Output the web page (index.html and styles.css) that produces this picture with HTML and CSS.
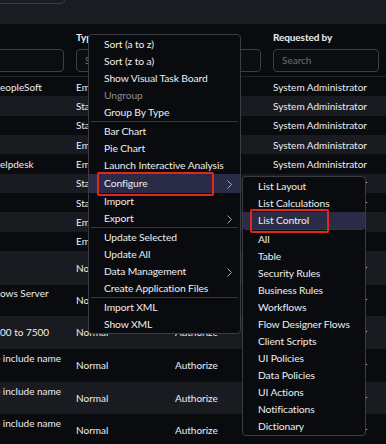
FILE: index.html
```html
<!DOCTYPE html>
<html lang="en">
<head>
    <meta charset="UTF-8">
    <title>Change Requests</title>
    <link rel="stylesheet" href="styles.css">
</head>
<body>
    <div class="topbar">
        <div class="top-input"></div>
    </div>

    <div class="list">
        <div class="row head">
            <div></div>
            <div>Type</div>
            <div>Approval</div>
            <div>Requested by</div>
        </div>
        <div class="row filters">
            <div><div class="search first"></div></div>
            <div><div class="search">Search</div></div>
            <div><div class="search">Search</div></div>
            <div><div class="search">Search</div></div>
        </div>

        <div class="row"><div>eopleSoft</div><div>Emergency</div><div>Authorize</div><div>System Administrator</div></div>
        <div class="row alt"><div></div><div>Standard</div><div>Authorize</div><div>System Administrator</div></div>
        <div class="row"><div></div><div>Standard</div><div>Authorize</div><div>System Administrator</div></div>
        <div class="row alt"><div></div><div>Emergency</div><div>Authorize</div><div>System Administrator</div></div>
        <div class="row"><div>elpdesk</div><div>Emergency</div><div>Authorize</div><div>System Administrator</div></div>
        <div class="row alt"><div></div><div>Standard</div><div>Authorize</div><div>System Administrator</div></div>
        <div class="row"><div></div><div>Standard</div><div>Authorize</div><div>System Administrator</div></div>
        <div class="row alt"><div></div><div>Emergency</div><div>Authorize</div><div>Abel Tuter</div></div>
        <div class="row"><div></div><div>Emergency</div><div>Authorize</div><div>Abel Tuter</div></div>
        <div class="row alt tall r10"><div></div><div>Normal</div><div>Authorize</div><div>System Administrator</div></div>
        <div class="row tall r11"><div class="two">ows Server<br>&nbsp;</div><div>Normal</div><div>Authorize</div><div>System Administrator</div></div>
        <div class="row alt tall"><div>00 to 7500</div><div>Normal</div><div>Authorize</div><div>System Administrator</div></div>
        <div class="row tall"><div class="two cut">e include name<br>&nbsp;</div><div>Normal</div><div>Authorize</div><div>System Administrator</div></div>
        <div class="row alt tall r14"><div class="two cut">e include name<br>&nbsp;</div><div>Normal</div><div>Authorize</div><div>System Administrator</div></div>
        <div class="row tall r14"><div class="two cut">e include name<br>&nbsp;</div><div>Normal</div><div>Authorize</div><div>System Administrator</div></div>
    </div>

    <!-- context menu -->
    <div class="menu main-menu">
        <div class="item">Sort (a to z)</div>
        <div class="item">Sort (z to a)</div>
        <div class="item">Show Visual Task Board</div>
        <div class="item disabled">Ungroup</div>
        <div class="item">Group By Type</div>
        <div class="sep"></div>
        <div class="item">Bar Chart</div>
        <div class="item">Pie Chart</div>
        <div class="item">Launch Interactive Analysis</div>
        <div class="item active big">Configure
            <svg class="chev" width="5" height="9" viewBox="0 0 5 9"><polyline points="0.5,0.5 4.5,4.5 0.5,8.5" fill="none" stroke="#a9abb2" stroke-width="1"/></svg>
            <span class="mark mark-configure"></span>
        </div>
        <div class="item">Import</div>
        <div class="item">Export
            <svg class="chev" width="5" height="9" viewBox="0 0 5 9"><polyline points="0.5,0.5 4.5,4.5 0.5,8.5" fill="none" stroke="#a9abb2" stroke-width="1"/></svg>
        </div>
        <div class="sep"></div>
        <div class="item">Update Selected</div>
        <div class="item">Update All</div>
        <div class="item">Data Management
            <svg class="chev" width="5" height="9" viewBox="0 0 5 9"><polyline points="0.5,0.5 4.5,4.5 0.5,8.5" fill="none" stroke="#a9abb2" stroke-width="1"/></svg>
        </div>
        <div class="item">Create Application Files</div>
        <div class="sep"></div>
        <div class="item">Import XML</div>
        <div class="item">Show XML</div>
    </div>

    <div class="menu sub-menu">
        <div class="item">List Layout</div>
        <div class="item">List Calculations</div>
        <div class="item active">List Control
            <span class="mark mark-control"></span>
        </div>
        <div class="sep"></div>
        <div class="item">All</div>
        <div class="item">Table</div>
        <div class="item">Security Rules</div>
        <div class="item">Business Rules</div>
        <div class="item">Workflows</div>
        <div class="item">Flow Designer Flows</div>
        <div class="item">Client Scripts</div>
        <div class="item">UI Policies</div>
        <div class="item">Data Policies</div>
        <div class="item">UI Actions</div>
        <div class="item">Notifications</div>
        <div class="item">Dictionary</div>
    </div>
</body>
</html>
```

FILE: styles.css
```css
/* General */
body {
    margin: 0;
    width: 386px;
    height: 444px;
    overflow: hidden;
    background: #0a0b0e;
    color: #eceef2;
    font-family: 'Lato', 'Noto Sans', sans-serif;
    font-size: 10px;
}

/* Top band */
.topbar {
    height: 24px;
    background: #1b1c22;
    border-bottom: 1px solid #0a0b0d;
    overflow: hidden;
}

.top-input {
    width: 70px;
    height: 20px;
    margin: -18px 0 0 -7px;
    border: 1px solid #3b3e47;
    border-radius: 4px;
}

/* List */
.row {
    display: grid;
    grid-template-columns: 64px 87px 86px 106px;
    column-gap: 12px;
    align-items: center;
    height: 19.33px;
    background: #0a0b0e;
    white-space: nowrap;
    overflow: hidden;
}

.row.alt {
    background: #1a1b21;
}

.row > div {
    overflow: hidden;
}

.row.head {
    height: 24px;
    font-weight: 700;
    letter-spacing: -0.1px;
}

.row.filters {
    height: 27px;
    border-bottom: 1px solid #23252c;
    align-items: start;
}

.search {
    height: 21px;
    line-height: 21px;
    padding-left: 8px;
    border: 1px solid #3b3e47;
    border-radius: 4px;
    color: #6c6f78;
    background: #0c0d11;
}

.search.first {
    margin-left: -10px;
}

.row.tall {
    height: 33px;
}

.row.r10 {
    height: 34px;
}

.row.r11 {
    height: 31px;
}

.row.r14 {
    height: 32px;
}

.two {
    line-height: 14px;
}

.cut {
    text-indent: -5px;
}

/* Context menus */
.menu {
    position: absolute;
    background: #0a0b0e;
    border: 1px solid #3a3c44;
    border-radius: 4px;
    padding-top: 1px;
    font-size: 10.3px;
    letter-spacing: -0.1px;
}

.main-menu {
    left: 88px;
    top: 34px;
    width: 151px;
}

.sub-menu {
    left: 242px;
    top: 176px;
    width: 122px;
}

.item {
    position: relative;
    height: 17px;
    line-height: 17px;
    padding-left: 15px;
    white-space: nowrap;
}

.item.big {
    height: 19px;
    line-height: 19px;
}

.item.active {
    background: #2a2b47;
}

.item.disabled {
    color: #8b8d94;
}

.chev {
    position: absolute;
    right: 8px;
    top: 50%;
    margin-top: -4px;
}

.sep {
    height: 1px;
    margin: 0 2px 1px;
    background: #34363e;
}

/* Red annotation boxes */
.mark {
    position: absolute;
    border: 2px solid #e3261c;
    border-radius: 2px;
}

.mark-configure {
    left: 8px;
    top: -2px;
    width: 113px;
    height: 20px;
}

.mark-control {
    left: 7px;
    top: -3px;
    width: 75px;
    height: 20px;
}
```
